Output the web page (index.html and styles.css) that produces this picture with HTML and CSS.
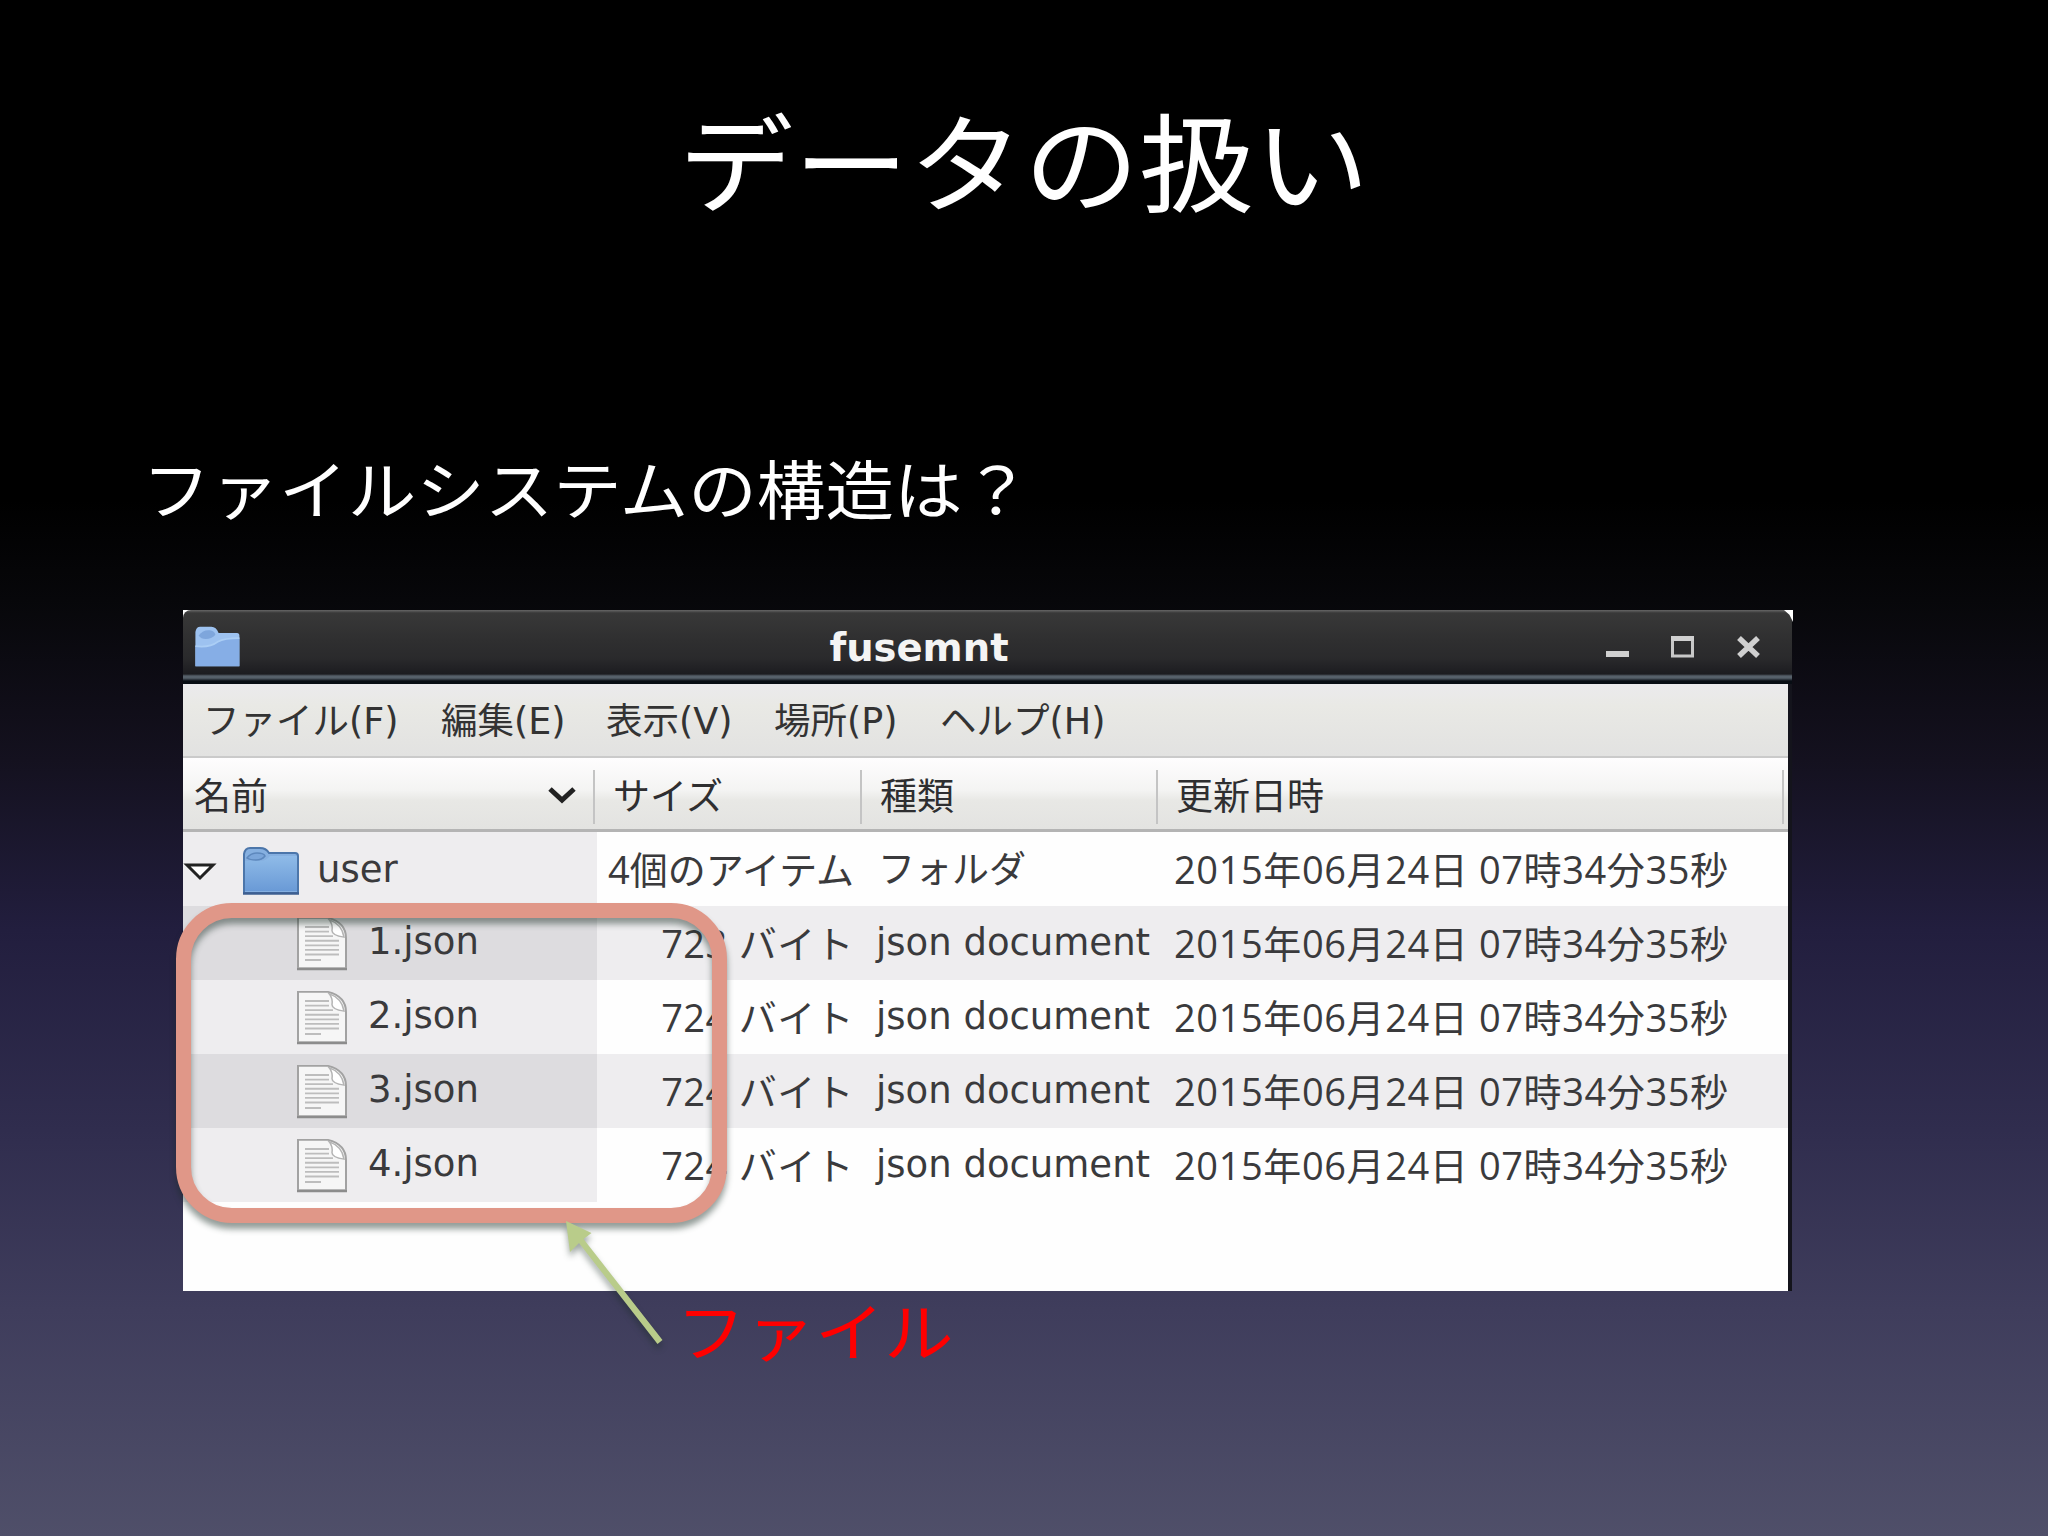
FILE: index.html
```html
<!DOCTYPE html>
<html lang="ja">
<head>
    <meta charset="UTF-8">
    <title>データの扱い</title>
    <link rel="stylesheet" href="styles.css">
</head>
<body>
    <svg class="defs" width="0" height="0">
        <defs>
            <linearGradient id="folder-fill" x1="0" y1="0" x2="0" y2="1">
                <stop offset="0" stop-color="#8fbbe8"/>
                <stop offset="1" stop-color="#6a9ad6"/>
            </linearGradient>
            <symbol id="folder" viewBox="0 0 60 50" preserveAspectRatio="none">
                <path d="M3 47V8q1-6 6-6h10q6 0 9 5h26q3 0 3 3v37z" fill="#86b0e0" stroke="#4c76aa" stroke-width="2"/>
                <path d="M4 15h16q5 0 9-5h27v35H4z" fill="url(#folder-fill)"/>
                <path d="M6 12q4-5 10-5q7 0 8 3q-3 4-9 4q-6 0-9-2z" fill="#7ba6da" stroke="#5d88bd" stroke-width="1.500"/>
                <path d="M2 47.500h56" stroke="#3e5f91" stroke-width="2.500"/>
            </symbol>
            <symbol id="title-folder" viewBox="0 0 60 50" preserveAspectRatio="none">
                <path d="M3 47V8q1-6 6-6h14q6 0 9 7h23q3 0 3 3v35z" fill="#9dc2f0"/>
                <path d="M7 12q6-7 14-6q6 1 7 5q-5 5-12 5q-6 0-9-4z" fill="#7ea6dc"/>
                <path d="M3 24q18 2 28-5q8-4 27-4v32H3z" fill="#86aee6"/>
                <path d="M3 24q18 2 28-5q8-4 27-4" fill="none" stroke="#abcef5" stroke-width="2"/>
            </symbol>
            <symbol id="page" viewBox="0 0 52 60" preserveAspectRatio="none">
                <path d="M2 2h30q18 5 18 22v33H2z" fill="#f6f6f6" stroke="#a2a2a2" stroke-width="2"/>
                <path d="M1 58h50" stroke="#8c8c8c" stroke-width="2.500"/>
                <path d="M9 12h24M9 17h24M9 22h28M9 27h34M9 32h34M9 37h34M9 42h34M9 48h16" stroke="#bdbdbd" stroke-width="2"/>
                <path d="M33 4q4 5 3 12q0 5 12 7q-2-14-15-19z" fill="#fff" stroke="#b4b4b4" stroke-width="1.500"/>
            </symbol>
        </defs>
    </svg>

    <h1>データの扱い</h1>
    <h2>ファイルシステムの構造は？</h2>

    <div class="window">
        <div class="titlebar">
            <svg class="title-icon"><use href="#title-folder"/></svg>
            <span class="title">fusemnt</span>
            <svg class="controls" width="170" height="40" viewBox="0 0 170 40">
                <path d="M9 27h23" stroke="#d0d0d0" stroke-width="6"/>
                <path d="M75.500 11h20v18h-20z" fill="none" stroke="#c8c8c8" stroke-width="3"/>
                <path d="M74 11.500h23" stroke="#d0d0d0" stroke-width="5"/>
                <path d="M142 11l19 18M161 11l-19 18" stroke="#d0d0d0" stroke-width="5.500"/>
            </svg>
        </div>
        <div class="menubar">
            <span>ファイル(F)</span>
            <span>編集(E)</span>
            <span>表示(V)</span>
            <span>場所(P)</span>
            <span>ヘルプ(H)</span>
        </div>
        <div class="row header">
            <div class="name">名前
                <svg class="sort" width="30" height="20" viewBox="0 0 30 20"><path d="M3 4l12 11L27 4" fill="none" stroke="#222" stroke-width="5"/></svg>
            </div>
            <div class="size">サイズ</div>
            <div class="kind">種類</div>
            <div class="date">更新日時</div>
        </div>
        <div class="row">
            <div class="name folder">
                <svg class="expander" width="34" height="20" viewBox="0 0 34 20"><path d="M4 4h26L17 17z" fill="#fff" stroke="#222" stroke-width="3"/></svg>
                <svg class="folder-icon"><use href="#folder"/></svg>
                <span>user</span>
            </div>
            <div class="size">4個のアイテム</div>
            <div class="kind ja">フォルダ</div>
            <div class="date">2015年06月24日 07時34分35秒</div>
        </div>
        <div class="row odd">
            <div class="name file"><svg class="page-icon"><use href="#page"/></svg><span>1.json</span></div>
            <div class="size bytes">723 バイト</div>
            <div class="kind">json document</div>
            <div class="date">2015年06月24日 07時34分35秒</div>
        </div>
        <div class="row">
            <div class="name file"><svg class="page-icon"><use href="#page"/></svg><span>2.json</span></div>
            <div class="size bytes">724 バイト</div>
            <div class="kind">json document</div>
            <div class="date">2015年06月24日 07時34分35秒</div>
        </div>
        <div class="row odd">
            <div class="name file"><svg class="page-icon"><use href="#page"/></svg><span>3.json</span></div>
            <div class="size bytes">724 バイト</div>
            <div class="kind">json document</div>
            <div class="date">2015年06月24日 07時34分35秒</div>
        </div>
        <div class="row">
            <div class="name file"><svg class="page-icon"><use href="#page"/></svg><span>4.json</span></div>
            <div class="size bytes">724 バイト</div>
            <div class="kind">json document</div>
            <div class="date">2015年06月24日 07時34分35秒</div>
        </div>
        <div class="corner"></div>
    </div>

    <div class="highlight"></div>
    <svg class="arrow" width="120" height="150" viewBox="0 0 120 150">
        <path d="M16 11L41.500 23L33.500 29L112.500 130L107.500 134L29 33L20 42z" fill="#b9cc8a"/>
    </svg>
    <p class="label">ファイル</p>
</body>
</html>
```
FILE: styles.css
```css
* {
    box-sizing: border-box;
}
body {
    margin: 0;
    position: relative;
    width: 2048px;
    height: 1536px;
    overflow: hidden;
    background: linear-gradient(#000 0, #000 500px, #07070a 600px, #14111f 760px, #221e3e 930px, #302d4e 1130px, #3f3d5c 1310px, #4f4f69 1536px);
    font-family: "Noto Sans CJK JP", sans-serif;
    color: #fff;
}
.defs {
    position: absolute;
}
h1, h2, p {
    margin: 0;
    font-weight: 400;
    white-space: nowrap;
}
h1 {
    height: 440px;
    padding-top: 78px;
    font-size: 114px;
    line-height: 160px;
    text-align: center;
    transform: scale(1.01, 0.94);
    transform-origin: 1024px 164px;
}
h2 {
    height: 170px;
    padding-left: 142px;
    font-size: 68px;
    line-height: 92px;
    transform: scale(1.008, 0.94);
    transform-origin: 142px 50px;
}
.window {
    position: relative;
    width: 1609px;
    height: 681px;
    margin-left: 183px;
    background: #fefefe;
    border-right: 4px solid #14141c;
    color: #3a3a3c;
    font-family: "Open Sans", "Noto Sans CJK JP", sans-serif;
    font-size: 38px;
    white-space: nowrap;
}
.titlebar {
    display: flex;
    align-items: center;
    width: 1609px;
    height: 74px;
    padding: 0 25px 0 10px;
    background: linear-gradient(#666 0, #383838 3px, #2f2f30 30px, #2a2a2c 48px, #1c1c20 64px, #56606a 66px, #56606a 68px, #080d14 71px, #080d14 74px);
    border-top-left-radius: 8px;
}
.title-icon {
    width: 48px;
    height: 44px;
}
.title {
    flex: 1;
    text-align: center;
    font: bold 38.500px "DejaVu Sans", sans-serif;
    color: #f4f4f4;
}
.corner {
    position: absolute;
    top: 0;
    right: -5px;
    width: 9px;
    height: 12px;
    background: #fff;
    clip-path: polygon(0 0, 100% 0, 100% 100%, 60% 40%);
}
.menubar {
    display: grid;
    grid-template-columns: 238px 165px 168px 166px 200px;
    height: 74px;
    padding-left: 20px;
    line-height: 76px;
    font-family: "DejaVu Sans", "Noto Sans CJK JP", sans-serif;
    font-size: 36.500px;
    color: #333;
    background: linear-gradient(#ebeaed, #e9e9e5 30%, #e2e2e1);
    border-bottom: 2px solid #cacaca;
}
.row {
    display: grid;
    grid-template-columns: 414px 265px 296px 1fr;
    height: 74px;
    line-height: 74px;
}
.row .name {
    background: #eeedef;
    font-family: "DejaVu Sans", sans-serif;
    font-size: 37px;
}
.row .size {
    padding-right: 8px;
    text-align: right;
}
.row .bytes {
    word-spacing: 1px;
    letter-spacing: 0.4px;
}
.row .kind {
    padding-left: 14px;
    line-height: 73px;
    font-family: "DejaVu Sans", "Noto Sans CJK JP", sans-serif;
    font-size: 37px;
}
.row .kind.ja {
    padding-left: 16px;
    line-height: 78px;
}
.row .date {
    padding-left: 16px;
    letter-spacing: 0.6px;
}
.row.odd {
    background: #eeedef;
}
.row.odd .name {
    background: #dddcdf;
}
.row.header {
    grid-template-columns: 412px 267px 296px 626px 1fr;
    background: linear-gradient(#fefdfe, #f4f4f3 45%, #e8e8e5 60%, #e3e3e1);
    border-bottom: 3px solid #b4b4b4;
    color: #2e2e30;
}
.row.header > div {
    padding-left: 18px;
    text-align: left;
    line-height: 73px;
    background: linear-gradient(#c4c4c4, #c4c4c4) right 12px / 2px 54px no-repeat;
    font-family: "Noto Sans CJK JP", sans-serif;
    font-size: 37px;
    letter-spacing: 0;
}
.row.header .name {
    position: relative;
    padding-left: 11px;
}
.sort {
    position: absolute;
    right: 18px;
    top: 27px;
}
.folder, .file {
    display: flex;
    align-items: center;
}
.name span {
    line-height: 72px;
    padding-bottom: 2px;
}
.folder-icon {
    width: 60px;
    height: 50px;
    margin: 0 16px 0 24px;
}
.file {
    padding-left: 113px;
}
.page-icon {
    width: 52px;
    height: 55px;
    margin-right: 20px;
}
.highlight {
    position: absolute;
    left: 176px;
    top: 903px;
    width: 551px;
    height: 320px;
    border: 15px solid #e09788;
    border-radius: 56px;
    filter: drop-shadow(0 6px 3px rgba(20, 40, 30, 0.45));
}
.arrow {
    position: absolute;
    left: 550px;
    top: 1210px;
    filter: drop-shadow(0 5px 3px rgba(20, 40, 30, 0.4));
}
.label {
    position: absolute;
    left: 679px;
    top: 1279px;
    font-size: 68px;
    line-height: 100px;
    color: #f00;
    transform: scale(1.02, 0.94);
}
```
